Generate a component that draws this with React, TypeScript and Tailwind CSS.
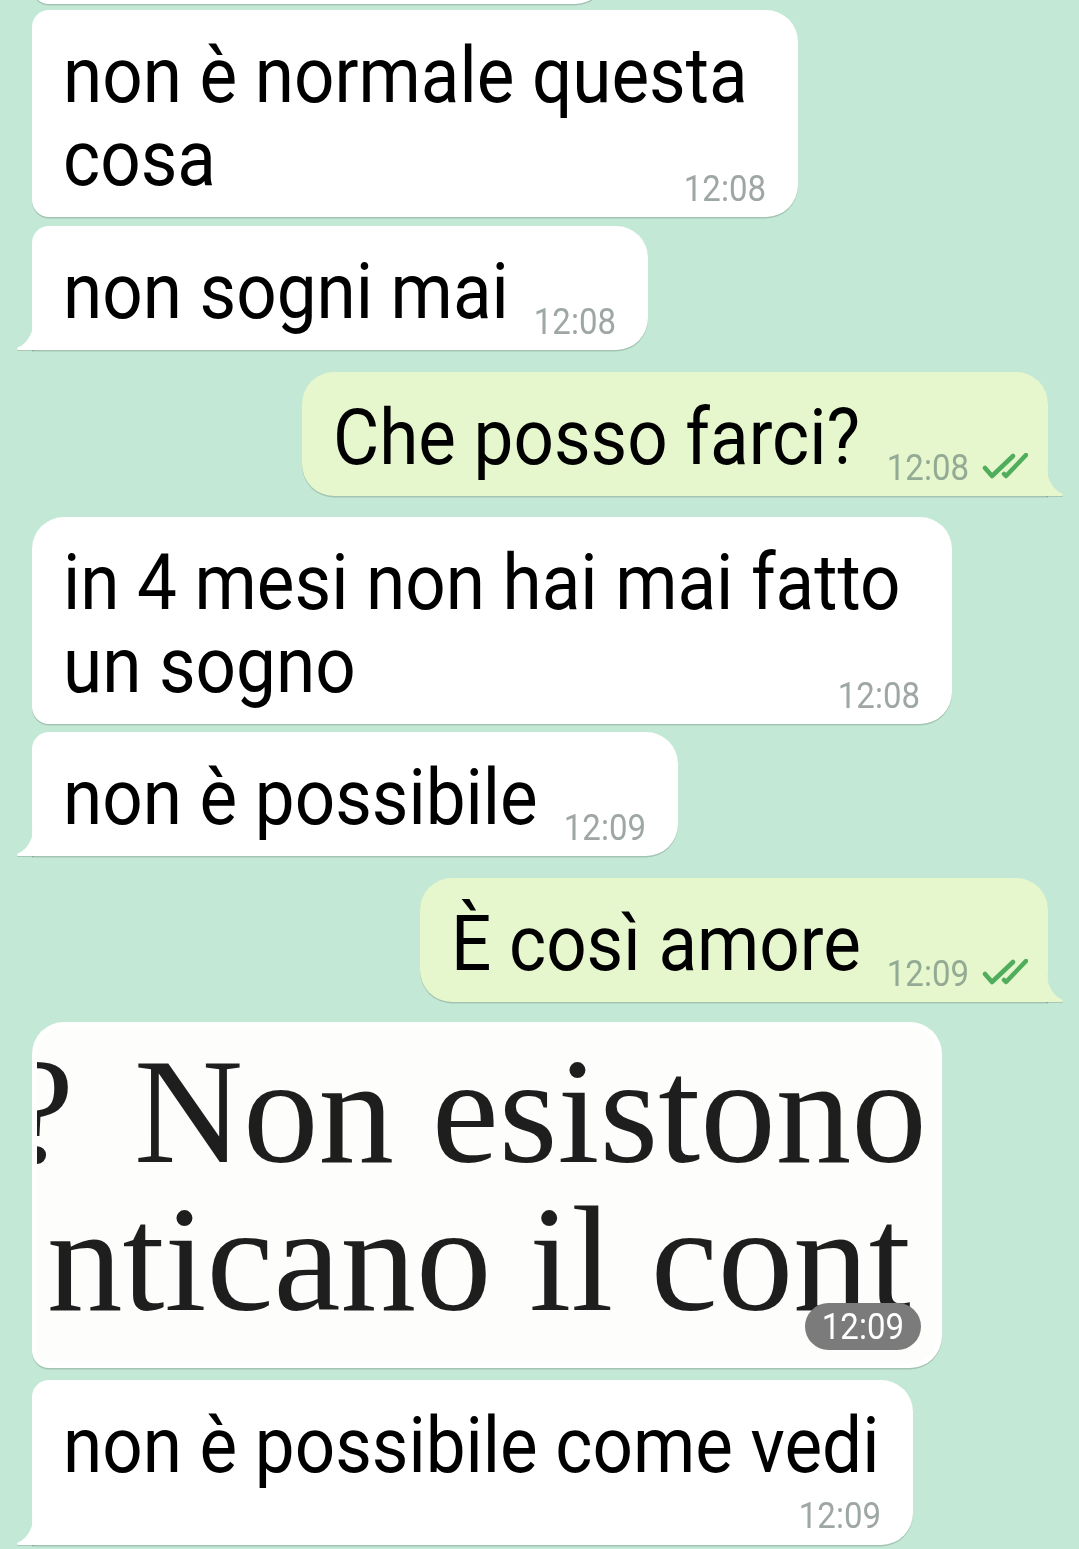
import React from 'react';

type Msg = {
    side: 'in' | 'out';
    width: string;
    lines: string[];
    time: string;
    timeBelow?: boolean;
    tail?: boolean;
    corners: string;
    mt: string;
};

const messages: Msg[] = [
    {
        side: 'in',
        width: 'w-[766px]',
        lines: ['non è normale questa', 'cosa'],
        time: '12:08',
        corners: 'rounded-tl-[17px] rounded-bl-[17px] rounded-tr-[32px] rounded-br-[32px]',
        mt: 'mt-[6px]',
    },
    {
        side: 'in',
        width: 'w-[616px]',
        lines: ['non sogni mai'],
        time: '12:08',
        tail: true,
        corners: 'rounded-tl-[17px] rounded-bl-none rounded-tr-[32px] rounded-br-[32px]',
        mt: 'mt-[9px]',
    },
    {
        side: 'out',
        width: 'w-[746px]',
        lines: ['Che posso farci?'],
        time: '12:08',
        tail: true,
        corners: 'rounded-tl-[32px] rounded-bl-[32px] rounded-tr-[32px] rounded-br-none',
        mt: 'mt-[22px]',
    },
    {
        side: 'in',
        width: 'w-[920px]',
        lines: ['in 4 mesi non hai mai fatto', 'un sogno'],
        time: '12:08',
        corners: 'rounded-tl-[32px] rounded-bl-[17px] rounded-tr-[32px] rounded-br-[32px]',
        mt: 'mt-[21px]',
    },
    {
        side: 'in',
        width: 'w-[646px]',
        lines: ['non è possibile'],
        time: '12:09',
        tail: true,
        corners: 'rounded-tl-[17px] rounded-bl-none rounded-tr-[32px] rounded-br-[32px]',
        mt: 'mt-[8px]',
    },
    {
        side: 'out',
        width: 'w-[628px]',
        lines: ['È così amore'],
        time: '12:09',
        tail: true,
        corners: 'rounded-tl-[32px] rounded-bl-[32px] rounded-tr-[32px] rounded-br-none',
        mt: 'mt-[22px]',
    },
];

const lastMsg: Msg = {
    side: 'in',
    width: 'w-[881px]',
    lines: ['non è possibile come vedi'],
    time: '12:09',
    timeBelow: true,
    tail: true,
    corners: 'rounded-tl-[17px] rounded-bl-none rounded-tr-[32px] rounded-br-[32px]',
    mt: 'mt-[12px]',
};

const Ticks = () => (
    <svg width="46" height="26" viewBox="0 0 46 26" className="mb-[4px]">
        <g fill="none" stroke="#4fad5b" strokeWidth="4.5" strokeLinecap="round" strokeLinejoin="round">
            <path d="M3 15 L10 23 L31 3" />
            <path d="M22 21 L24 23 L44 2" />
        </g>
    </svg>
);

const TailIn = () => (
    <svg width="18" height="34" viewBox="0 0 18 34" className="absolute -left-[16px] bottom-0 drop-shadow-[0_1.5px_0.5px_rgba(0,0,0,0.14)]">
        <path d="M18 0 C18 19 10 28 2 31.5 Q0 33 2 34 L18 34 Z" fill="#ffffff" />
    </svg>
);

const TailOut = () => (
    <svg width="18" height="36" viewBox="0 0 18 36" className="absolute -right-[16px] bottom-0 drop-shadow-[0_1.5px_0.5px_rgba(0,0,0,0.14)]">
        <path d="M0 0 C0 20 8 30 16 33.5 Q18 35 16 36 L0 36 Z" fill="#e6f6cd" />
    </svg>
);

const Time = ({ side, time }: { side: 'in' | 'out'; time: string }) => (
    <div className="flex items-center gap-[13px] shrink-0">
        <span
            className={`inline-block scale-y-110 text-[33px] leading-[38px] ${
                side === 'in' ? 'text-[#9ea7a5]' : 'text-[#93aa94]'
            }`}
        >
            {time}
        </span>
        {side === 'out' && <Ticks />}
    </div>
);

const Line = ({ text, className = '' }: { text: string; className?: string }) => (
    <div className={`text-[71px] leading-[83px] text-black whitespace-nowrap ${className}`}>
        <span className="inline-block scale-y-110">{text}</span>
    </div>
);

const Bubble = ({ m }: { m: Msg }) => {
    const body = m.lines.slice(0, -1);
    const last = m.lines[m.lines.length - 1];
    return (
        <div className={`flex ${m.side === 'in' ? 'justify-start pl-[32px]' : 'justify-end pr-[31px]'} ${m.mt}`}>
            <div
                className={`relative ${m.width} ${m.corners} ${
                    m.side === 'in' ? 'bg-white pl-[31px] pr-[32px]' : 'bg-[#e6f6cd] pl-[31px] pr-[20px]'
                } pt-[24px] pb-[9px] shadow-[0_1.5px_0.5px_rgba(0,0,0,0.16)]`}
            >
                {body.map((l) => (
                    <Line key={l} text={l} />
                ))}
                {m.timeBelow ? (
                    <>
                        <Line text={last} />
                        <div className="flex justify-end mt-[10px] mb-[1px]">
                            <Time side={m.side} time={m.time} />
                        </div>
                    </>
                ) : (
                    <div className="flex items-end justify-between">
                        <Line text={last} className="mb-[8px]" />
                        <Time side={m.side} time={m.time} />
                    </div>
                )}
                {m.tail && (m.side === 'in' ? <TailIn /> : <TailOut />)}
            </div>
        </div>
    );
};

const ImageBubble = () => (
    <div className="flex justify-start pl-[32px] mt-[20px]">
        <div className="w-[910px] h-[346px] p-[5px] bg-white rounded-tl-[32px] rounded-tr-[32px] rounded-br-[32px] rounded-bl-[17px] shadow-[0_1.5px_0.5px_rgba(0,0,0,0.16)]">
            <div className="relative w-full h-full overflow-hidden bg-[#fdfdfb] rounded-tl-[27px] rounded-tr-[27px] rounded-br-[27px] rounded-bl-[12px]">
                <div className="flex flex-col pt-[10px] font-['Liberation_Serif',serif] text-[151px] leading-[148px] text-[#1e1e1e] whitespace-nowrap">
                    <div className="flex">
                        <span className="-ml-[30px]">?</span>
                        <span className="ml-[60px]">Non esistono</span>
                    </div>
                    <div className="ml-[10px]">nticano il cont</div>
                </div>
                {/* time badge over the picture */}
                <div className="absolute right-[16px] bottom-[13px] h-[47px] px-[17px] flex items-center rounded-full bg-[#7b7b7b]">
                    <span className="inline-block scale-y-110 text-[33px] leading-[38px] text-white">12:09</span>
                </div>
            </div>
        </div>
    </div>
);

export default function App() {
    return (
        <div className="w-full min-h-[1549px] overflow-hidden bg-[#c3e9d6] flex flex-col font-['Roboto',sans-serif]">
            {/* previous message, cut off at the top */}
            <div className="flex justify-start pl-[32px] -mt-[120px]">
                <div className="w-[575px] h-[124px] bg-white rounded-tl-[17px] rounded-bl-[17px] rounded-tr-[32px] rounded-br-[32px] shadow-[0_1.5px_0.5px_rgba(0,0,0,0.16)]" />
            </div>

            {messages.map((m, i) => (
                <Bubble key={i} m={m} />
            ))}

            <ImageBubble />

            <Bubble m={lastMsg} />
        </div>
    );
}
